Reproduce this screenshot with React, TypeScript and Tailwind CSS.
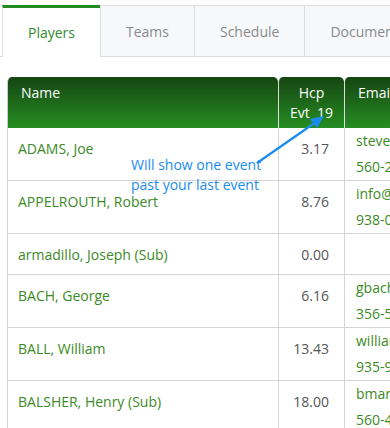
import React from 'react';

const font = { fontFamily: '"Open Sans", "Noto Sans", sans-serif' };

const players = [
  { name: 'ADAMS, Joe', hcp: '3.17', email: 'steveadams@gmail.com', phone: '560-2' + '41-8837' },
  { name: 'APPELROUTH, Robert', hcp: '8.76', email: 'info@appelrouth.com', phone: '938-0' + '12-4410' },
  { name: 'armadillo, Joseph (Sub)', hcp: '0.00', email: '', phone: '' },
  { name: 'BACH, George', hcp: '6.16', email: 'gbach@comcast.net', phone: '356-5' + '52-1903' },
  { name: 'BALL, William', hcp: '13.43', email: 'williamball@yahoo.com', phone: '935-9' + '08-7714' },
  { name: 'BALSHER, Henry (Sub)', hcp: '18.00', email: 'bmarsh@gmail.com', phone: '560-4' + '33-2219' },
];

const tabs = ['Teams', 'Schedule', 'Documents', 'Results'];

const App = () => {
  return (
    <div className="w-[390px] h-[428px] overflow-hidden bg-white relative text-[14px]" style={font}>
      {/* Tabs */}
      <div className="flex items-end pt-[5px] pl-[2px] border-b border-[#dddddd] h-[57px] whitespace-nowrap">
        <div className="w-[98px] h-[52px] -mb-px bg-white border-t-[3px] border-t-[#228b22] border-l border-l-[#e2e2e2] flex items-center justify-center text-[#2e8b2e] shrink-0">
          Players
        </div>
        {tabs.map((t) => (
          <div
            key={t}
            className="h-[51px] px-[25px] bg-[#f7f8fa] border-t border-l border-[#dddddd] flex items-center text-[#8a8a8a] shrink-0"
          >
            {t}
          </div>
        ))}
      </div>

      {/* Table */}
      <div className="pt-[20px] pl-[7px]">
        <table className="border-separate border-spacing-0 table-fixed w-[640px]">
          <colgroup>
            <col className="w-[271px]" />
            <col className="w-[66px]" />
            <col className="w-[303px]" />
          </colgroup>
          <thead>
            <tr className="h-[51px]">
              <th className="align-top text-left font-normal text-white pl-[13px] pt-[6px] leading-5 rounded-tl-[5px] rounded-tr-[5px] bg-gradient-to-b from-[#154612] to-[#268e22] border-l border-[#cccccc]">
                Name
              </th>
              <th className="align-top text-center font-normal text-white pt-[6px] leading-5 rounded-t-[5px] bg-gradient-to-b from-[#154612] to-[#268e22] border-l border-[#dddddd]">
                <div>Hcp</div>
                <div>Evt&nbsp;&nbsp;19</div>
              </th>
              <th className="align-top text-left font-normal text-white pl-[13px] pt-[6px] leading-5 rounded-t-[5px] bg-gradient-to-b from-[#154612] to-[#268e22] border-l border-[#dddddd]">
                Email / Phone
              </th>
            </tr>
          </thead>
          <tbody>
            {players.map((p) => (
              <tr key={p.name} className={p.email ? 'h-[53px]' : 'h-[41px]'}>
                <td className="align-top pl-[10px] pt-[11px] leading-5 text-[#3b8a26] border-l border-b border-[#d4d4d4] whitespace-nowrap">
                  {p.name}
                </td>
                <td className="align-top text-right pr-[15px] pt-[11px] leading-5 text-[#555555] border-l border-b border-[#d4d4d4]">
                  {p.hcp}
                </td>
                <td className="align-top pl-[11px] pt-0 leading-[26px] text-[#3b8a26] border-l border-b border-[#d4d4d4] whitespace-nowrap">
                  {p.email && (
                    <>
                      <div>{p.email}</div>
                      <div>{p.phone}</div>
                    </>
                  )}
                </td>
              </tr>
            ))}
          </tbody>
        </table>
      </div>

      {/* Annotation over the table */}
      <div className="absolute left-[131px] top-[155px] text-[#1a8cf0] leading-5">
        <div>Will show one event</div>
        <div>past your last event</div>
      </div>
      <svg className="absolute left-0 top-0 pointer-events-none" width="390" height="428">
        <line x1="257" y1="163" x2="316" y2="122" stroke="#1a8cf0" strokeWidth="2.2" />
        <polygon points="324,116 310,119 317,128" fill="#1a8cf0" />
      </svg>
    </div>
  );
};

export default App;
